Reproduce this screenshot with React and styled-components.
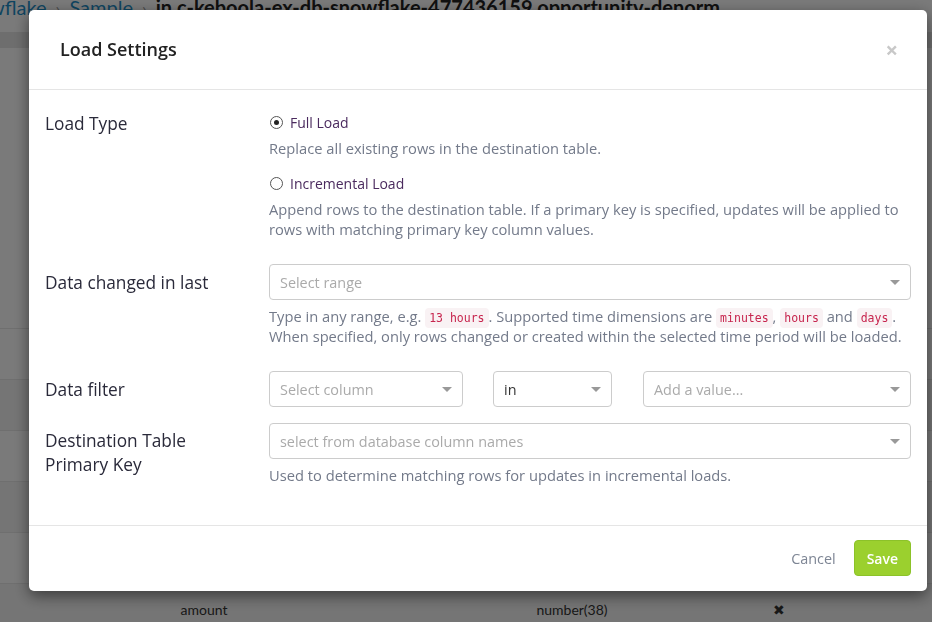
import styled, { createGlobalStyle } from "styled-components";

const GlobalStyle = createGlobalStyle`
  * { box-sizing: border-box; }
  html, body { margin: 0; padding: 0; }
  body {
    font-family: "Open Sans", "Noto Sans", sans-serif;
    background: #fff;
    color: #222;
    overflow: hidden;
  }
`;

const columns = [
  { name: "account_id", type: "varchar(255)" },
  { name: "close_date", type: "date" },
  { name: "stage", type: "varchar(255)" },
  { name: "owner", type: "varchar(255)" },
  { name: "probability", type: "number(38)" },
  { name: "amount", type: "number(38)" },
];

const App = () => {
  return (
    <>
      <GlobalStyle />
      <Page>
        <Breadcrumb>
          <Crumb $first>Snowflake</Crumb>
          <Sep>›</Sep>
          <Crumb>Sample</Crumb>
          <Sep>›</Sep>
          <CrumbCurrent>in.c-keboola-ex-db-snowflake-477436159.opportunity-denorm</CrumbCurrent>
        </Breadcrumb>
        <PageBand />
        <PageSpacer />
        <Table>
          {columns.map((c, i) => (
            <TableRow key={c.name} $odd={i % 2 === 1}>
              <Cell $w="408px">{c.name}</Cell>
              <Cell $w="328px">{c.type}</Cell>
              <Cell $w="86px">✖</Cell>
            </TableRow>
          ))}
        </Table>
      </Page>

      <Backdrop>
        <Modal>
          <Header>
            <Title>Load Settings</Title>
            <Close>×</Close>
          </Header>
          <Body>
            <Group>
              <Label>Load Type</Label>
              <Control>
                <RadioRow>
                  <Radio $checked />
                  <RadioText>Full Load</RadioText>
                </RadioRow>
                <Help>Replace all existing rows in the destination table.</Help>
                <RadioRow $second>
                  <Radio />
                  <RadioText>Incremental Load</RadioText>
                </RadioRow>
                <Help>
                  Append rows to the destination table. If a primary key is specified, updates will be applied to
                  <br />
                  rows with matching primary key column values.
                </Help>
              </Control>
            </Group>

            <Group>
              <Label>Data changed in last</Label>
              <Control>
                <Select>
                  <Placeholder>Select range</Placeholder>
                  <Caret />
                </Select>
                <Help>
                  Type in any range, e.g. <Code>13 hours</Code>. Supported time dimensions are <Code>minutes</Code>,{" "}
                  <Code>hours</Code> and <Code>days</Code>.<br />
                  When specified, only rows changed or created within the selected time period will be loaded.
                </Help>
              </Control>
            </Group>

            <Group>
              <Label>Data filter</Label>
              <FilterRow>
                <Select $w="194px">
                  <Placeholder>Select column</Placeholder>
                  <Caret />
                </Select>
                <Select $w="119px">
                  <Value>in</Value>
                  <Caret />
                </Select>
                <Select $grow>
                  <Placeholder>Add a value...</Placeholder>
                  <Caret />
                </Select>
              </FilterRow>
            </Group>

            <Group>
              <Label $tight>
                Destination Table
                <br />
                Primary Key
              </Label>
              <Control>
                <Select>
                  <Placeholder>select from database column names</Placeholder>
                  <Caret />
                </Select>
                <Help>Used to determine matching rows for updates in incremental loads.</Help>
              </Control>
            </Group>
          </Body>
          <Footer>
            <LinkButton>Cancel</LinkButton>
            <SaveButton>Save</SaveButton>
          </Footer>
        </Modal>
      </Backdrop>
    </>
  );
};

export default App;

const Page = styled.div`
  width: 932px;
  height: 622px;
  overflow: hidden;
  font-family: Lato, "Open Sans", sans-serif;
`;

const Breadcrumb = styled.div`
  display: flex;
  align-items: baseline;
  gap: 9px;
  height: 32px;
  margin-top: -8px;
  font-size: 20px;
  line-height: 30px;
  white-space: nowrap;
`;

const Crumb = styled.span`
  color: #1f8fc9;
  margin-left: ${(p) => (p.$first ? "-44px" : "0")};
`;

const Sep = styled.span`
  color: #999;
  font-size: 17px;
`;

const CrumbCurrent = styled.span`
  color: #222;
  font-weight: 700;
`;

const PageBand = styled.div`
  height: 16px;
  background: #e6e6e6;
  margin-top: 8px;
`;

const PageSpacer = styled.div`
  height: 280px;
`;

const Table = styled.div`
  display: flex;
  flex-direction: column;
`;

const TableRow = styled.div`
  display: flex;
  height: 51px;
  align-items: center;
  background: ${(p) => (p.$odd ? "#f5f5f5" : "#fff")};
  border-top: 1px solid #e8e8e8;
  font-size: 14px;
  color: #333;
`;

const Cell = styled.div`
  width: ${(p) => p.$w};
  text-align: center;
`;

const Backdrop = styled.div`
  position: fixed;
  inset: 0;
  background: rgba(0, 0, 0, 0.52);
  padding: 10px 5px 0 29px;
`;

const Modal = styled.div`
  width: 898px;
  background: #fff;
  border-radius: 5px;
  box-shadow: 0 5px 15px rgba(0, 0, 0, 0.5);
  display: flex;
  flex-direction: column;
`;

const Header = styled.div`
  height: 80px;
  padding: 0 31px 2px;
  display: flex;
  align-items: center;
  justify-content: space-between;
  border-bottom: 1px solid #e5e5e5;
`;

const Title = styled.h4`
  margin: 0;
  font-size: 18px;
  font-weight: 600;
  color: #222;
`;

const Close = styled.span`
  font-size: 22px;
  font-weight: 700;
  color: #c8c8c8;
  line-height: 1;
  margin-right: -2px;
`;

const Body = styled.div`
  padding: 15px 16px 15px;
`;

const Group = styled.div`
  display: flex;
  margin-bottom: 16px;
`;

const Label = styled.div`
  width: 224px;
  flex-shrink: 0;
  padding-top: ${(p) => (p.$tight ? "6px" : "7px")};
  font-size: 17.3px;
  line-height: 24px;
  color: #2a2a3a;
`;

const Control = styled.div`
  flex: 1;
  display: flex;
  flex-direction: column;
`;

const RadioRow = styled.div`
  display: flex;
  align-items: center;
  gap: 7px;
  height: 20px;
  margin-top: ${(p) => (p.$second ? "6px" : "7px")};
`;

const Radio = styled.span`
  width: 13px;
  height: 13px;
  margin-left: 1px;
  border-radius: 50%;
  border: 1px solid #555;
  display: inline-flex;
  align-items: center;
  justify-content: center;
  &::after {
    content: "";
    width: 5px;
    height: 5px;
    border-radius: 50%;
    background: ${(p) => (p.$checked ? "#222" : "transparent")};
  }
`;

const RadioText = styled.span`
  font-size: 14px;
  color: #4a2a5e;
`;

const Help = styled.p`
  margin: 6px 0 9px;
  font-size: 14.7px;
  line-height: 20px;
  height: auto;
  color: #737a8a;
  white-space: nowrap;
`;

const Code = styled.code`
  font-family: "DejaVu Sans Mono", "Liberation Mono", monospace;
  font-size: 11.5px;
  line-height: 1;
  color: #c7254e;
  background: #f9f2f4;
  padding: 3px 4px;
  border-radius: 4px;
`;

const Select = styled.div`
  height: 36px;
  width: ${(p) => p.$w || "auto"};
  flex: ${(p) => (p.$grow ? 1 : "none")};
  border: 1px solid #ccc;
  border-radius: 4px;
  display: flex;
  align-items: center;
  justify-content: space-between;
  padding: 0 10px;
  font-size: 14.4px;
  background: #fff;
`;

const Placeholder = styled.span`
  color: #aaa;
`;

const Value = styled.span`
  color: #333;
`;

const Caret = styled.span`
  width: 0;
  height: 0;
  border-left: 5px solid transparent;
  border-right: 5px solid transparent;
  border-top: 5px solid #999;
`;

const FilterRow = styled.div`
  flex: 1;
  display: flex;
  gap: 30px;
  & > div:last-child {
    margin-left: 1px;
  }
`;

const Footer = styled.div`
  height: 66px;
  border-top: 1px solid #e5e5e5;
  display: flex;
  align-items: center;
  justify-content: flex-end;
  gap: 18px;
  padding: 0 16px 1px;
`;

const LinkButton = styled.span`
  font-size: 14.4px;
  color: #7d8594;
`;

const SaveButton = styled.button`
  height: 36px;
  padding: 0 12px;
  border: 1px solid #8cc229;
  border-radius: 4px;
  background: #9bd02e;
  color: #fff;
  font-family: inherit;
  font-size: 14px;
  font-weight: 600;
`;
